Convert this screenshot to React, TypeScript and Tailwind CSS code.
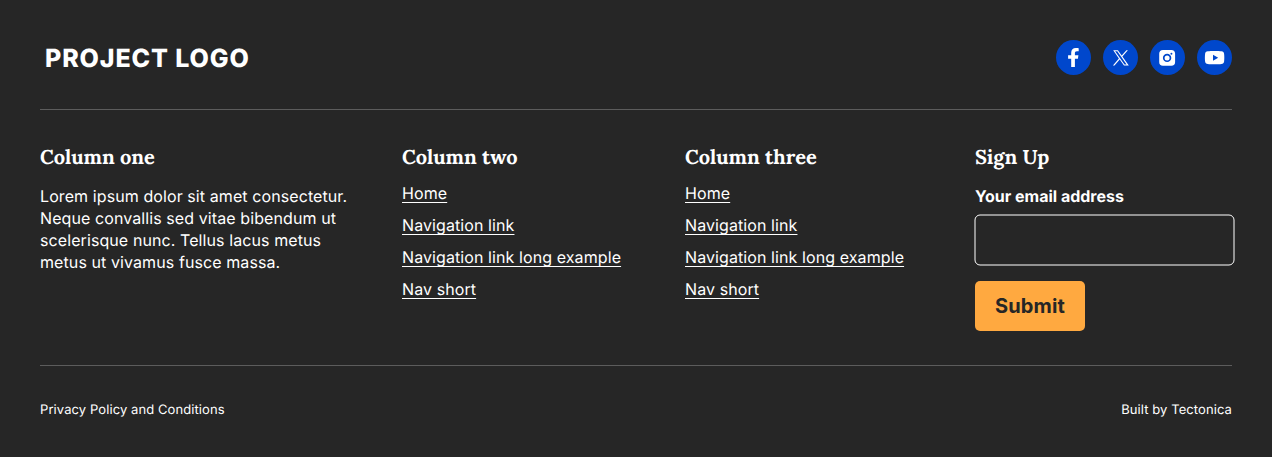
import type { ReactNode } from "react";

const links = ["Home", "Navigation link", "Navigation link long example", "Nav short"];

function Heading({ children }: { children: ReactNode }) {
  return (
    <h2 className="h-6 whitespace-nowrap font-['Lora','Liberation_Serif',serif] text-xl leading-[26px] font-bold tracking-normal">
      {children}
    </h2>
  );
}

function NavColumn({ title, className }: { title: string; className: string }) {
  return (
    <nav className={className}>
      <Heading>{title}</Heading>
      <ul className="mt-[13px] flex flex-col gap-2.5">
        {links.map((link) => (
          <li key={link} className="h-[22px] leading-[22px]">
            <a href="#" className="underline decoration-[1.4px] underline-offset-[3px] [text-decoration-skip-ink:none]">
              {link}
            </a>
          </li>
        ))}
      </ul>
    </nav>
  );
}

function Social({ label, children }: { label: string; children: ReactNode }) {
  return (
    <a href="#" aria-label={label} className="block size-[35px] rounded-full bg-[#0047cc]">
      <svg viewBox="0 0 35 35" className="size-[35px]" fill="#fff">
        {children}
      </svg>
    </a>
  );
}

export default function App() {
  return (
    <footer className="flex h-[457px] w-[1272px] flex-col bg-[#262626] px-10 pt-10 font-['Inter',sans-serif] text-base tracking-[0.09px] text-white [text-rendering:geometricPrecision]">
      <div className="flex h-[70px] items-start justify-between border-b border-[#5c5c5c]">
        <div className="pl-[5px] text-[25px] leading-[38px] font-extrabold tracking-[0.88px]">PROJECT LOGO</div>
        <div className="flex gap-3">
          <Social label="Facebook">
            <path d="M15.2 27v-8.2h-3.1v-3.5h3.1v-2.6c0-3.1 1.8-4.7 4.6-4.7 1.6 0 2.9.2 2.9.2v3h-1.7c-1.6 0-2.1.9-2.1 1.8v2.3h3.5l-.5 3.5h-3V27z" />
          </Social>
          <Social label="X">
            <path
              fillRule="evenodd"
              d="M10.2 10.2h4.7l3.8 5.2 4.7-5.2h1.5l-5.5 6.2 6.4 9.1h-4.8l-4.3-6-5.2 6H9.9l6-6.9zm1.9 1.1 9.4 13.1h2.1l-9.3-13.1z"
            />
          </Social>
          <Social label="Instagram">
            <path
              fillRule="evenodd"
              d="M13 10h8.3a3.8 3.8 0 0 1 3.8 3.8V22a3.8 3.8 0 0 1-3.8 3.8H13A3.8 3.8 0 0 1 9.2 22v-8.2A3.8 3.8 0 0 1 13 10zm4.1 3.7a4.2 4.2 0 1 0 0 8.4 4.2 4.2 0 0 0 0-8.4zm0 1.7a2.5 2.5 0 1 1 0 5 2.5 2.5 0 0 1 0-5zm4.3-2.7a1 1 0 1 0 0 2 1 1 0 0 0 0-2z"
            />
          </Social>
          <Social label="YouTube">
            <path
              fillRule="evenodd"
              d="M10.8 11.3c2.7-.4 10.9-.4 13.6 0 1.7.2 2.5 1 2.7 2.4.3 2.4.3 5.5 0 7.9-.2 1.4-1 2.2-2.7 2.4-2.7.4-10.9.4-13.6 0-1.7-.2-2.5-1-2.7-2.4-.3-2.4-.3-5.5 0-7.9.2-1.4 1-2.2 2.7-2.4zm5.2 3.5v6l5.2-3z"
            />
          </Social>
        </div>
      </div>

      <div className="flex h-[256px] border-b border-[#5c5c5c] pt-[35px]">
        <section className="w-[362px]">
          <Heading>Column one</Heading>
          <p className="mt-4 w-[322px] leading-[22px]">
            Lorem ipsum dolor sit amet consectetur. Neque convallis sed vitae bibendum ut scelerisque nunc. Tellus
            lacus metus metus ut vivamus fusce massa.
          </p>
        </section>
        <NavColumn title="Column two" className="w-[283px]" />
        <NavColumn title="Column three" className="w-[290px]" />
        <form className="w-[257px] tracking-normal">
          <Heading>Sign Up</Heading>
          <label htmlFor="email" className="mt-4 block leading-[22px] font-bold">
            Your email address
          </label>
          <input
            id="email"
            type="email"
            className="mt-[7px] -ml-px block h-[51px] w-[260px] translate-[0.5px] rounded-[5.5px] border border-white bg-transparent px-3 outline-none"
          />
          <button
            type="button"
            className="mt-4 block h-[50px] w-[110px] rounded-[5px] bg-[#ffa940] text-xl font-bold tracking-[0.1px] text-[#262626]"
          >
            Submit
          </button>
        </form>
      </div>

      <div className="flex justify-between pt-[34px] text-[13px] leading-5">
        <a href="#">Privacy Policy and Conditions</a>
        <span>Built by Tectonica</span>
      </div>
    </footer>
  );
}
